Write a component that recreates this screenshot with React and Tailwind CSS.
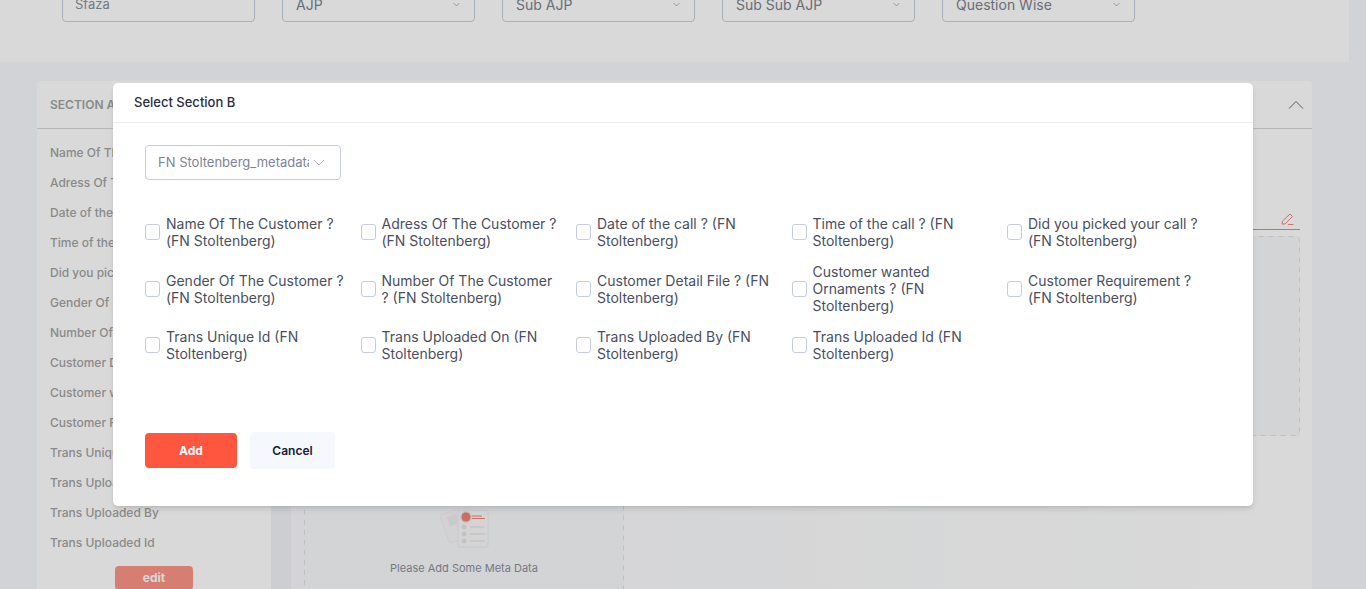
const FIELDS = [
  'Name Of The Customer ?',
  'Adress Of The Customer ?',
  'Date of the call ?',
  'Time of the call ?',
  'Did you picked your call ?',
  'Gender Of The Customer ?',
  'Number Of The Customer ?',
  'Customer Detail File ?',
  'Customer wanted Ornaments ?',
  'Customer Requirement ?',
  'Trans Unique Id',
  'Trans Uploaded On',
  'Trans Uploaded By',
  'Trans Uploaded Id',
]

const FILTERS = ['AJP', 'Sub AJP', 'Sub Sub AJP', 'Question Wise']

function Chevron({ className }) {
  return (
    <svg viewBox="0 0 12 7" fill="none" stroke="currentColor" strokeWidth="1" className={className}>
      <path d="M1 1l5 5 5-5" />
    </svg>
  )
}

function FilterBar() {
  return (
    <div className="h-[62px] w-[1349px] bg-white flex items-end gap-[27px] pl-[62px] pb-[40px] overflow-hidden">
      <div className="w-[193px] h-[34px] shrink-0 rounded border border-[#c5d0dc] flex items-center px-3 text-[13px] text-[#8a8f99]">
        Sfaza
      </div>
      {FILTERS.map((f) => (
        <div
          key={f}
          className="w-[193px] h-[34px] shrink-0 rounded border border-[#c5d0dc] flex items-center justify-between px-[13px] text-sm text-[#7c828d]"
        >
          {f}
          <Chevron className="w-[7px] h-[5px] mr-[1px] mb-[2px] text-[#7c828d]" />
        </div>
      ))}
    </div>
  )
}

function MetaIcon() {
  return (
    <svg viewBox="0 0 52 44" className="w-[52px] h-[44px]">
      <rect x="6" y="6" width="20" height="30" rx="2" fill="#f7f7f9" stroke="#f1f1f3" transform="rotate(-20 16 21)" />
      <rect x="10" y="10" width="10" height="10" rx="1" fill="#eeeef0" transform="rotate(-20 15 15)" />
      <rect x="20" y="5" width="30" height="37" rx="2" fill="#f9f9fa" stroke="#eeeef0" />
      <circle cx="28" cy="12" r="6" fill="#e6e6e8" />
      <circle cx="28" cy="12" r="4.500" fill="#f47f6f" />
      <path d="M34 11h10M34 13.500h13" stroke="#f47f6f" strokeWidth="1" />
      <circle cx="26" cy="22" r="2.400" fill="#e4e4e6" />
      <circle cx="26" cy="29" r="2.400" fill="#e4e4e6" />
      <circle cx="26" cy="36" r="2.400" fill="#e4e4e6" />
      <path d="M32 22h14M32 29h15M32 36h15" stroke="#e8e8ea" strokeWidth="1.500" />
    </svg>
  )
}

function DashedOutline() {
  return (
    <svg className="absolute inset-0 w-full h-full pointer-events-none">
      <rect
        x="0.5"
        y="0.5"
        rx="4"
        fill="none"
        stroke="#e1e2e6"
        strokeDasharray="5 5"
        className="[width:calc(100%-1px)] [height:calc(100%-1px)]"
      />
    </svg>
  )
}

function SectionCard() {
  return (
    <div className="ml-[37px] mt-[19px] w-[1275px] h-[600px] bg-white rounded-t">
      <div className="h-[48px] border-b border-[#d8d8d8] flex items-center justify-between pl-[13px] pr-[8px]">
        <span className="text-xs font-semibold text-[#a3a3a3]">SECTION A</span>
        <svg viewBox="0 0 16 9" fill="none" stroke="#6e6e6e" strokeWidth="1" className="w-4 h-[9px]">
          <path d="M1 8.500l7-7 7 7" />
        </svg>
      </div>
      <div className="flex">
        <div className="w-[234px] shrink-0 pl-[13px] pt-[9px]">
          {FIELDS.map((f) => (
            <div key={f} className="h-[30px] flex items-center text-xs font-medium text-[#a3a3a3] whitespace-nowrap">
              {f}
            </div>
          ))}
          <div className="mt-[8px] ml-[65px] w-[78px] h-[24px] rounded bg-[#fc9487] flex items-center justify-center text-xs font-bold text-white">
            edit
          </div>
        </div>
        <div className="w-[20px] shrink-0 bg-[#f1f2f7]" />
        <div className="flex-1 pl-[13px] pr-[12px] bg-linear-to-r from-[#f9fafc] to-white">
          <div className="mt-[71px] h-[30px] border-b border-[#a3a3a3] flex justify-end items-center pr-[6px]">
            <svg viewBox="0 0 13 12" fill="none" stroke="#f08a7d" strokeWidth="1" className="w-[13px] h-[12px] mt-[9px]">
              <path d="M1 11l.5-3L9 1l2.500 2.500L4 11zM7 11.500h5.500" />
            </svg>
          </div>
          <div className="relative mt-[6px] h-[200px] bg-[#f8f9fc]">
            <DashedOutline />
          </div>
          <div className="relative mt-[12px] w-[320px] h-[170px] bg-[#f8f9fc] flex flex-col items-center pt-[57px]">
            <DashedOutline />
            <MetaIcon />
            <span className="mt-[11px] text-[11px] text-[#8a8f99]">Please Add Some Meta Data</span>
          </div>
        </div>
      </div>
    </div>
  )
}

function FieldCheck({ label }) {
  return (
    <label className="flex items-center gap-[6px] pr-[15px]">
      <span className="w-[15px] h-[16px] shrink-0 rounded-[3px] border border-[#c5cbe0] bg-white" />
      <span className="text-sm leading-[17px] text-[#4a4f5e]">{label} (FN Stoltenberg)</span>
    </label>
  )
}

function SectionModal() {
  return (
    <div className="absolute inset-0 bg-black/15">
      <div className="absolute left-[113px] top-[83px] w-[1140px] h-[423px] bg-white rounded-[5px] shadow-md">
        <div className="h-[40px] border-b border-[#ebedf3] flex items-center pl-[21px] text-[13px] font-medium text-[#2b2e3d]">
          Select Section B
        </div>
        <div className="px-[32px] pt-[22px]">
          <div className="w-[196px] h-[35px] rounded border border-[#c5cbe0] flex items-center pl-[12px] pr-[14px] gap-[4px] text-[13px] text-[#7e8299]">
            <span className="w-[151px] overflow-hidden whitespace-nowrap pt-[1px]">FN Stoltenberg_metadata</span>
            <Chevron className="w-[12px] h-[7px] shrink-0 text-[#b5b5c3]" />
          </div>
          <div className="mt-[35px] grid grid-cols-[repeat(5,215.5px)] gap-y-[14px] items-center">
            {FIELDS.map((f) => (
              <FieldCheck key={f} label={f} />
            ))}
          </div>
          <div className="mt-[70px] flex items-center gap-[13px]">
            <button className="w-[92px] h-[35px] rounded bg-[#ff5640] text-xs font-bold text-white">Add</button>
            <button className="w-[85px] h-[37px] rounded bg-[#f5f8fd] text-xs font-semibold text-[#181c32]">Cancel</button>
          </div>
        </div>
      </div>
    </div>
  )
}

export default function App() {
  return (
    <div className="relative h-[589px] overflow-hidden bg-[#f7f8fd] font-['Inter',sans-serif]">
      <FilterBar />
      <SectionCard />
      <SectionModal />
    </div>
  )
}
